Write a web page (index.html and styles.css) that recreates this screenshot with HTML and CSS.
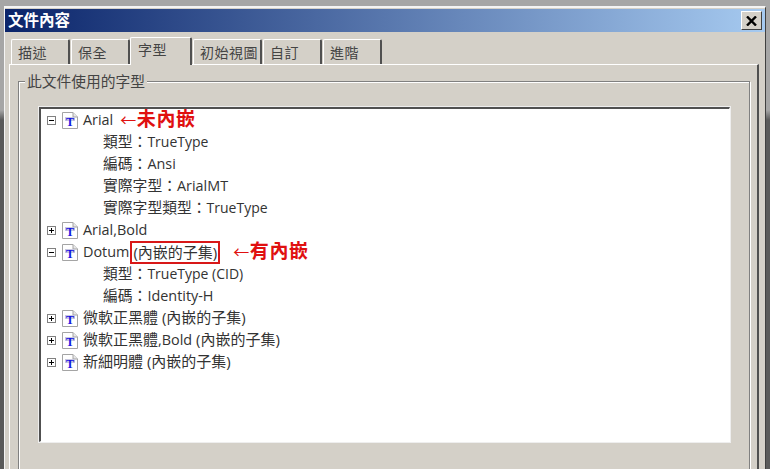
FILE: index.html
```html
<!DOCTYPE html>
<html lang="zh-Hant">
<head>
<meta charset="utf-8">
<title>文件內容</title>
<link rel="stylesheet" href="styles.css">
</head>
<body>
<svg class="defs" width="0" height="0" aria-hidden="true">
  <defs>
    <symbol id="doc" viewBox="0 0 16 17">
      <path d="M.5.5H11L15.5 5V16.5H.5Z" fill="#fff" stroke="#a4a4a4"/>
      <path d="M11 .5V5H15.5" fill="#e8e8e8" stroke="#a4a4a4"/>
      <rect x="3" y="5" width="10" height="4" fill="#c8c8e0"/>
      <text x="8" y="13.5" text-anchor="middle" class="t-glyph">T</text>
    </symbol>
    <symbol id="minus" viewBox="0 0 9 9">
      <rect x=".5" y=".5" width="8" height="8" fill="#fff" stroke="#808080"/>
      <path d="M2 4.5H7" stroke="#000"/>
    </symbol>
    <symbol id="plus" viewBox="0 0 9 9">
      <rect x=".5" y=".5" width="8" height="8" fill="#fff" stroke="#808080"/>
      <path d="M2 4.5H7M4.5 2V7" stroke="#000"/>
    </symbol>
  </defs>
</svg>
<div class="window">
  <header class="titlebar">
    <span class="title">文件內容</span>
    <button class="close" aria-label="關閉">
      <svg width="11" height="10" viewBox="0 0 11 10"><path d="M1 .5L10 9.5M10 .5L1 9.5" stroke="#000" stroke-width="2.4"/></svg>
    </button>
  </header>
  <nav class="tabs">
    <div class="tab w60">描述</div>
    <div class="tab w60">保全</div>
    <div class="tab active">字型</div>
    <div class="tab w70">初始視圖</div>
    <div class="tab w60">自訂</div>
    <div class="tab w60">進階</div>
  </nav>
  <section class="panel">
    <div class="group">
      <div class="legend">此文件使用的字型</div>
      <div class="tree">
        <div class="row"><svg class="exp"><use href="#minus"/></svg><svg class="doc"><use href="#doc"/></svg><span class="lat">Arial</span><span class="note"><span class="arrow">←</span>未內嵌</span></div>
        <div class="row child"><span>類型：<span class="tt">TrueType</span></span></div>
        <div class="row child"><span>編碼：<span class="lat">Ansi</span></span></div>
        <div class="row child"><span>實際字型：<span class="lat">ArialMT</span></span></div>
        <div class="row child"><span>實際字型類型：<span class="tt">TrueType</span></span></div>
        <div class="row"><svg class="exp"><use href="#plus"/></svg><svg class="doc"><use href="#doc"/></svg><span class="lat">Arial,Bold</span></div>
        <div class="row"><svg class="exp"><use href="#minus"/></svg><svg class="doc"><use href="#doc"/></svg><span class="lat">Dotum</span><span class="boxed">(內嵌的子集)</span><span class="note note-b"><span class="arrow">←</span>有內嵌</span></div>
        <div class="row child"><span>類型：<span class="tt">TrueType (CID)</span></span></div>
        <div class="row child"><span>編碼：<span class="lat">Identity-H</span></span></div>
        <div class="row"><svg class="exp"><use href="#plus"/></svg><svg class="doc"><use href="#doc"/></svg><span class="cjk">微軟正黑體 (內嵌的子集)</span></div>
        <div class="row"><svg class="exp"><use href="#plus"/></svg><svg class="doc"><use href="#doc"/></svg><span class="cjk">微軟正黑體<span class="lat">,Bold</span> (內嵌的子集)</span></div>
        <div class="row"><svg class="exp"><use href="#plus"/></svg><svg class="doc"><use href="#doc"/></svg><span class="cjk">新細明體 (內嵌的子集)</span></div>
      </div>
    </div>
  </section>
</div>
</body>
</html>
```
FILE: styles.css
```css
* { box-sizing: border-box; }
html, body { margin: 0; height: 469px; overflow: hidden; }
body {
  background: linear-gradient(to bottom, #a6a6a6 0, #a6a6a6 110px, #5a5a5a 120px, #5a5a5a 100%);
  font-family: "Open Sans", "Noto Sans CJK TC", sans-serif;
  font-size: 14px;
  color: #333;
  padding-top: 6px;
}
.defs { position: absolute; }
.t-glyph { font: bold 12px "Liberation Serif", serif; fill: #1414e0; }
.window {
  width: 762px;
  height: 463px;
  margin-left: 4px;
  background: #d4d0c8;
  border-top: 2px solid #f4f4f4;
  border-left: 1px solid #f4f4f4;
  border-right: 1px solid #404040;
  padding-top: 1px;
  overflow: hidden;
}
.titlebar {
  height: 23px;
  display: flex;
  align-items: center;
  justify-content: space-between;
  padding: 0 3px 0 3px;
  background: linear-gradient(to right, #0a246a, #a6caf0);
}
.title {
  color: #fff;
  font-weight: 700;
  font-size: 15.5px;
  line-height: 23px;
}
.close {
  width: 21px;
  height: 19px;
  padding: 0;
  display: flex;
  align-items: center;
  justify-content: center;
  background: #d4d0c8;
  border: 1px solid;
  border-color: #fff #404040 #404040 #fff;
}
.tabs {
  height: 32px;
  display: flex;
  align-items: flex-end;
  padding-left: 6px;
  position: relative;
  z-index: 1;
}
.tab {
  height: 25px;
  margin-right: 1px;
  border-top: 1px solid #fff;
  border-left: 1px solid #fff;
  border-right: 2px solid #505050;
  border-radius: 2px 2px 0 0;
  padding: 3px 0 0 6px;
  letter-spacing: .5px;
  line-height: 20px;
  font-size: 14px;
  color: #444;
}
.w60 { width: 59px; }
.w70 { width: 69px; }
.active {
  width: 62px;
  height: 28px;
  margin: 0 1px -1px -1px;
  padding: 2px 0 0 7px;
  background: #d4d0c8;
}
.panel {
  height: 420px;
  margin: 0 6px 0 4px;
  padding: 16px 8px 0 8px;
  border-top: 1px solid #fff;
  border-left: 1px solid #fff;
  border-right: 2px solid #505050;
}
.group {
  height: 400px;
  width: 732px;
  border: 1px solid #808080;
  box-shadow: 1px 1px 0 #fff, inset 1px 1px 0 #fff;
  padding: 25px 19px 0 20px;
  position: relative;
}
.legend {
  position: absolute;
  top: -10px;
  left: 6px;
  padding: 0 2px;
  background: #d4d0c8;
  line-height: 19px;
  font-size: 14.75px;
  color: #444;
}
.tree {
  height: 335px;
  width: 691px;
  background: #fff;
  border-top: 2px solid #505050;
  border-left: 2px solid #505050;
  border-right: 1px solid #fff;
  border-bottom: 1px solid #fff;
  outline: 1px solid #eee;
  padding-left: 6px;
}
.row {
  height: 22px;
  display: flex;
  align-items: center;
  white-space: nowrap;
  font-size: 15px;
  padding-bottom: 2px;
}
.lat { font-size: 14.4px; }
.tt { font-size: 14px; }
.cjk { padding-bottom: 2px; }
.child { padding: 0 0 4px 56px; font-size: 14.8px; }
.exp { width: 9px; height: 9px; margin: 2px 6px 0 0; flex: none; }
.doc { width: 16px; height: 17px; margin: 2px 5px 0 0; flex: none; }
.note {
  margin-left: 7px;
  color: #e01010;
  font-weight: 700;
  font-size: 19px;
  line-height: 22px;
  letter-spacing: .6px;
}
.arrow { font-size: 16px; font-weight: 400; }
.note-b { margin-left: 13px; }
.boxed {
  margin-left: 1px;
  padding: 0 1px;
  height: 23px;
  line-height: 19px;
  border: 2px solid #d81818;
  position: relative;
  top: 1px;
}
```
